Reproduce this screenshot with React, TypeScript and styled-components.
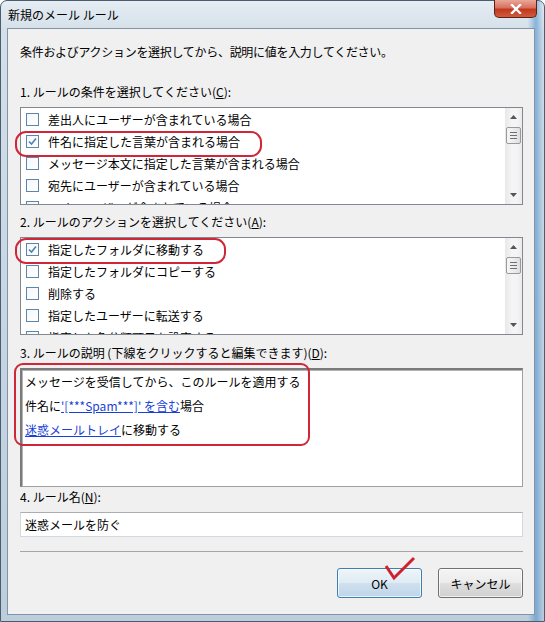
import styled, { createGlobalStyle } from 'styled-components';

const GlobalStyle = createGlobalStyle`
  html, body {
    margin: 0;
    padding: 0;
    background: #ffffff;
  }
  body {
    font-family: "Noto Sans CJK JP", "Liberation Sans", sans-serif;
    font-size: 12px;
    color: #000000;
    overflow: hidden;
  }
`;

const Window = styled.div`
  width: 545px;
  height: 622px;
  box-sizing: border-box;
  display: flex;
  flex-direction: column;
  padding: 0 9px 6px 6px;
  border: 1px solid #4a5d70;
  border-radius: 7px 7px 0 0;
  background:
    linear-gradient(90deg, rgba(255, 255, 255, 0) 97%, rgba(70, 140, 200, 0.55) 98.5%, rgba(255, 255, 255, 0) 100%),
    linear-gradient(180deg, #e6edf3 0%, #d3dfe9 5%, #c4d4e2 60%, #bccddc 100%);
`;

const TitleBar = styled.div`
  height: 27px;
  flex-shrink: 0;
  display: flex;
  justify-content: space-between;
  align-items: center;
`;

const TitleText = styled.span`
  padding-left: 1px;
  font-size: 12px;
  line-height: 18px;
  color: #000000;
`;

const CloseButton = styled.div`
  align-self: flex-start;
  margin: -1px -2px 0 0;
  width: 43px;
  height: 18px;
  box-sizing: border-box;
  border: 1px solid #5b2118;
  border-top: none;
  border-radius: 0 0 5px 5px;
  background: linear-gradient(180deg, #e9a79a 0%, #d7715d 45%, #c2391f 55%, #d05a3c 100%);
  display: flex;
  align-items: center;
  justify-content: center;
`;

const Client = styled.div`
  flex: 1;
  display: flex;
  flex-direction: column;
  padding: 0 11px 0 12px;
  background: #f0f0f0;
  border: 1px solid #8294a6;
`;

const Intro = styled.div`
  margin-top: 14px;
  line-height: 18px;
  letter-spacing: -0.3px;
`;

const Label = styled.div<{ $gap: number }>`
  margin-top: ${(p) => p.$gap}px;
  line-height: 18px;
`;

const Key = styled.span`
  text-decoration: underline;
`;

const Annotated = styled.div<{ $gap: number }>`
  position: relative;
  margin-top: ${(p) => p.$gap}px;
`;

const Ring = styled.div<{ $top: number; $left: number; $width: number; $height: number; $radius?: number }>`
  position: absolute;
  top: ${(p) => p.$top}px;
  left: ${(p) => p.$left}px;
  width: ${(p) => p.$width}px;
  height: ${(p) => p.$height}px;
  border: 2px solid #d0263a;
  border-radius: ${(p) => p.$radius ?? 11}px;
  pointer-events: none;
`;

const ListBox = styled.div`
  height: 98px;
  box-sizing: border-box;
  display: flex;
  border: 1px solid #828790;
  background: #ffffff;
  overflow: hidden;
`;

const Items = styled.div`
  flex: 1;
  display: flex;
  flex-direction: column;
`;

const ItemRow = styled.div`
  height: 22px;
  flex-shrink: 0;
  display: flex;
  align-items: center;
  padding-left: 5px;
  gap: 9px;
  white-space: nowrap;
`;

const Box = styled.span`
  width: 13px;
  height: 13px;
  box-sizing: border-box;
  border: 1px solid #5d84ab;
  background: linear-gradient(135deg, #f4f6f8 0%, #ffffff 100%);
  display: flex;
  align-items: center;
  justify-content: center;
  flex-shrink: 0;
`;

const ScrollBar = styled.div`
  width: 17px;
  flex-shrink: 0;
  display: flex;
  flex-direction: column;
  align-items: center;
  background: linear-gradient(90deg, #e8e8e8 0%, #f4f4f4 40%, #f4f4f4 70%, #ebebeb 100%);
`;

const ArrowCell = styled.div`
  height: 18px;
  width: 100%;
  flex-shrink: 0;
  display: flex;
  align-items: center;
  justify-content: center;
`;

const Thumb = styled.div`
  width: 15px;
  height: 17px;
  box-sizing: border-box;
  margin-top: 1px;
  border: 1px solid #999999;
  border-radius: 2px;
  background: linear-gradient(90deg, #f6f6f6 0%, #ececec 50%, #dedede 100%);
  display: flex;
  flex-direction: column;
  align-items: center;
  justify-content: center;
  gap: 2px;
`;

const Grip = styled.span`
  width: 7px;
  height: 1px;
  background: #6e6e6e;
`;

const Track = styled.div`
  flex: 1;
`;

const DescBox = styled.div`
  height: 119px;
  box-sizing: border-box;
  padding: 0 0 0 3px;
  background: #ffffff;
  border-style: solid;
  border-width: 2px 1px 1px 2px;
  border-color: #7a7a7a #a0a0a0 #a0a0a0 #7a7a7a;
  box-shadow: inset 1px 1px 0 #b4b4b4;
`;

const DescLine = styled.div`
  line-height: 24px;
  white-space: nowrap;
`;

const RuleLink = styled.a`
  color: #1a3fd6;
  text-decoration: underline;
  cursor: pointer;
`;

const NameInput = styled.div`
  margin-top: 6px;
  height: 25px;
  box-sizing: border-box;
  padding-left: 4px;
  display: flex;
  align-items: center;
  background: #ffffff;
  border: 1px solid #d2d8e0;
  border-top-color: #abadb3;
`;

const Divider = styled.div`
  margin-top: 14px;
  height: 1px;
  background: #a6a6a6;
`;

const ButtonRow = styled.div`
  margin-top: 16px;
  display: flex;
  justify-content: flex-end;
  gap: 16px;
`;

const DialogButton = styled.button<{ $primary?: boolean }>`
  position: relative;
  width: 85px;
  height: 30px;
  padding: 0;
  font-family: inherit;
  font-size: 12px;
  color: #000000;
  border-radius: 3px;
  border: 1px solid ${(p) => (p.$primary ? '#3c7fb1' : '#707070')};
  box-shadow: inset 0 0 0 1px rgba(255, 255, 255, 0.7);
  background: ${(p) =>
    p.$primary
      ? 'linear-gradient(180deg, #eef5fa 0%, #e0ebf4 48%, #cfe0ef 52%, #bfd5e9 100%)'
      : 'linear-gradient(180deg, #f4f4f4 0%, #ececec 48%, #dedede 52%, #d0d0d0 100%)'};
`;

const TickMark = styled.svg`
  position: absolute;
  left: 44px;
  top: -14px;
  overflow: visible;
`;

type ListItem = { label: string; checked?: boolean };

const conditions: ListItem[] = [
  { label: '差出人にユーザーが含まれている場合' },
  { label: '件名に指定した言葉が含まれる場合', checked: true },
  { label: 'メッセージ本文に指定した言葉が含まれる場合' },
  { label: '宛先にユーザーが含まれている場合' },
  { label: 'CC にユーザーが含まれている場合' },
];

const actions: ListItem[] = [
  { label: '指定したフォルダに移動する', checked: true },
  { label: '指定したフォルダにコピーする' },
  { label: '削除する' },
  { label: '指定したユーザーに転送する' },
  { label: '指定した色分類項目を設定する' },
];

function Arrow({ up }: { up?: boolean }) {
  return (
    <svg width="7" height="4" viewBox="0 0 7 4">
      <polygon points={up ? '0,4 7,4 3.5,0' : '0,0 7,0 3.5,4'} fill="#555555" />
    </svg>
  );
}

function CheckBox({ checked }: { checked?: boolean }) {
  return (
    <Box>
      {checked && (
        <svg width="11" height="11" viewBox="0 0 11 11">
          <path d="M2 5.5 L4.5 8 L9 2.5" fill="none" stroke="#4d82b8" strokeWidth="1.6" />
        </svg>
      )}
    </Box>
  );
}

function CheckList({ items }: { items: ListItem[] }) {
  return (
    <ListBox>
      <Items>
        {items.map((item) => (
          <ItemRow key={item.label}>
            <CheckBox checked={item.checked} />
            <span>{item.label}</span>
          </ItemRow>
        ))}
      </Items>
      <ScrollBar>
        <ArrowCell>
          <Arrow up />
        </ArrowCell>
        <Thumb>
          <Grip />
          <Grip />
          <Grip />
        </Thumb>
        <Track />
        <ArrowCell>
          <Arrow />
        </ArrowCell>
      </ScrollBar>
    </ListBox>
  );
}

export default function App() {
  return (
    <>
      <GlobalStyle />
      <Window>
        <TitleBar>
          <TitleText>新規のメール ルール</TitleText>
          <CloseButton>
            <svg width="12" height="10" viewBox="0 0 12 10">
              <path d="M2 1 L10 9 M10 1 L2 9" stroke="#ffffff" strokeWidth="2.4" strokeLinecap="square" />
            </svg>
          </CloseButton>
        </TitleBar>
        <Client>
          <Intro>条件およびアクションを選択してから、説明に値を入力してください。</Intro>

          <Label $gap={22}>
            1. ルールの条件を選択してください(<Key>C</Key>):
          </Label>
          <Annotated $gap={6}>
            <CheckList items={conditions} />
            <Ring $top={24} $left={-5} $width={243} $height={22} />
          </Annotated>

          <Label $gap={8}>
            2. ルールのアクションを選択してください(<Key>A</Key>):
          </Label>
          <Annotated $gap={6}>
            <CheckList items={actions} />
            <Ring $top={1} $left={-5} $width={207} $height={22} />
          </Annotated>

          <Label $gap={9}>
            3. ルールの説明 (下線をクリックすると編集できます)(<Key>D</Key>):
          </Label>
          <Annotated $gap={6}>
            <DescBox>
              <DescLine>メッセージを受信してから、このルールを適用する</DescLine>
              <DescLine>
                件名に<RuleLink>'[***Spam***]' を含む</RuleLink>場合
              </DescLine>
              <DescLine>
                <RuleLink>迷惑メールトレイ</RuleLink>に移動する
              </DescLine>
            </DescBox>
            <Ring $top={-5} $left={-6} $width={292} $height={79} $radius={9} />
          </Annotated>

          <Label $gap={1}>
            4. ルール名(<Key>N</Key>):
          </Label>
          <NameInput>迷惑メールを防ぐ</NameInput>

          <Divider />

          <ButtonRow>
            <DialogButton $primary>
              OK
              <TickMark width="36" height="26" viewBox="0 0 36 26">
                <polyline points="4,11 12,23 32,3" fill="none" stroke="#d0202e" strokeWidth="3" />
              </TickMark>
            </DialogButton>
            <DialogButton>キャンセル</DialogButton>
          </ButtonRow>
        </Client>
      </Window>
    </>
  );
}
